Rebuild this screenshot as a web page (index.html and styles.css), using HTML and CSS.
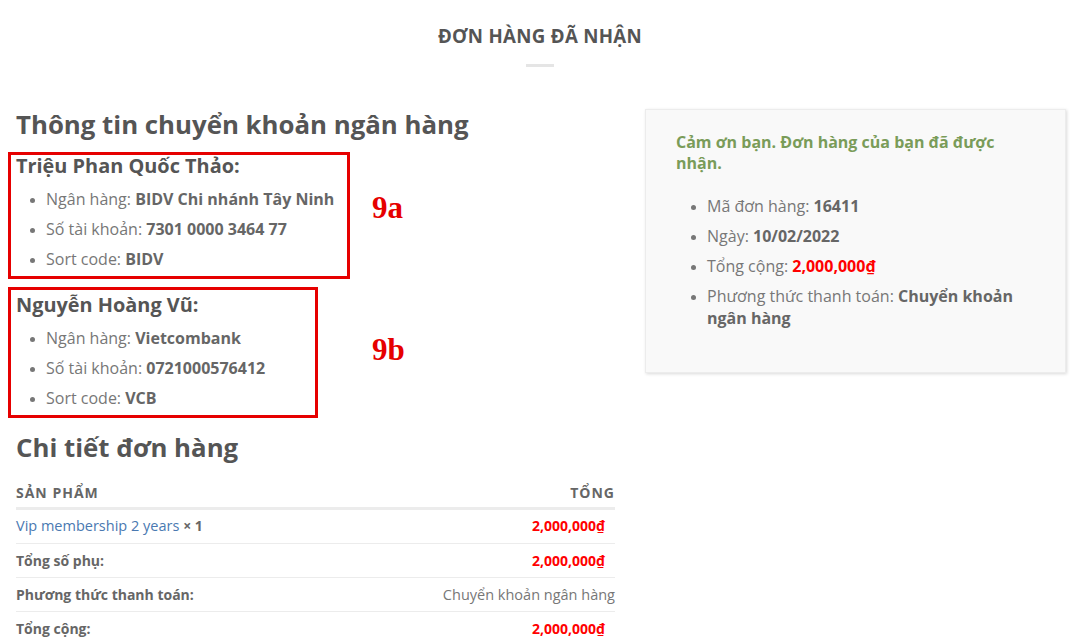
FILE: index.html
```html
<!DOCTYPE html>
<html lang="vi">
<head>
<meta charset="utf-8">
<title>Đơn hàng đã nhận</title>
<link rel="stylesheet" href="styles.css">
</head>
<body>
<div class="page">
  <header class="page-title">
    <h1>ĐƠN HÀNG ĐÃ NHẬN</h1>
    <div class="divider"></div>
  </header>
  <div class="content">
    <div class="main-col">
      <h2 class="section-title">Thông tin chuyển khoản ngân hàng</h2>
      <h3 class="account-name">Triệu Phan Quốc Thảo:</h3>
      <ul class="details">
        <li>Ngân hàng: <strong>BIDV Chi nhánh Tây Ninh</strong></li>
        <li>Số tài khoản: <strong>7301 0000 3464 77</strong></li>
        <li>Sort code: <strong>BIDV</strong></li>
      </ul>
      <h3 class="account-name">Nguyễn Hoàng Vũ:</h3>
      <ul class="details">
        <li>Ngân hàng: <strong>Vietcombank</strong></li>
        <li>Số tài khoản: <strong>0721000576412</strong></li>
        <li>Sort code: <strong>VCB</strong></li>
      </ul>
      <h2 class="section-title">Chi tiết đơn hàng</h2>
      <table class="order-table">
        <thead>
          <tr><th class="left">Sản phẩm</th><th class="right">Tổng</th></tr>
        </thead>
        <tbody>
          <tr><td class="left"><a href="#">Vip membership 2 years</a> <strong>× 1</strong></td><td class="right"><span class="amount">2,000,000₫</span></td></tr>
          <tr><th class="left">Tổng số phụ:</th><td class="right"><span class="amount">2,000,000₫</span></td></tr>
          <tr><th class="left">Phương thức thanh toán:</th><td class="right">Chuyển khoản ngân hàng</td></tr>
          <tr><th class="left">Tổng cộng:</th><td class="right"><span class="amount">2,000,000₫</span></td></tr>
        </tbody>
      </table>
    </div>
    <aside class="side-col">
      <div class="thankyou-box">
        <p class="thankyou">Cảm ơn bạn. Đơn hàng của bạn đã được nhận.</p>
        <ul class="details overview">
          <li>Mã đơn hàng: <strong>16411</strong></li>
          <li>Ngày: <strong>10/02/2022</strong></li>
          <li>Tổng cộng: <strong><span class="amount">2,000,000₫</span></strong></li>
          <li>Phương thức thanh toán: <strong>Chuyển khoản ngân hàng</strong></li>
        </ul>
      </div>
    </aside>
  </div>
  <div class="mark mark-a"></div>
  <div class="mark mark-b"></div>
  <span class="mark-label label-a">9a</span>
  <span class="mark-label label-b">9b</span>
</div>
</body>
</html>
```
FILE: styles.css
```css
* { box-sizing: border-box; }
html, body { margin: 0; padding: 0; background: #fff; }
body {
  font-family: "Open Sans", "Noto Sans", sans-serif;
  color: #777;
  font-size: 16px;
}
.page {
  position: relative;
  width: 1075px;
  height: 644px;
  overflow: hidden;
}
.page-title {
  display: flex;
  flex-direction: column;
  align-items: center;
  padding: 23px 0 0 5px;
}
.page-title h1 {
  margin: 0;
  font-size: 18.7px;
  line-height: 26px;
  font-weight: 700;
  color: #555;
  letter-spacing: 0.3px;
}
.divider {
  width: 28px;
  height: 3px;
  background: #e5e5e5;
  margin-top: 15px;
}
.content {
  display: flex;
  gap: 30px;
  padding: 0 9px 0 16px;
  margin-top: 42px;
}
.main-col { width: 599px; flex: none; }
.side-col { flex: 1; }
.section-title {
  margin: 0;
  font-size: 25.8px;
  line-height: 31px;
  font-weight: 700;
  color: #555;
}
.account-name {
  margin: 14px 0 0;
  font-size: 19.9px;
  line-height: 24px;
  font-weight: 700;
  color: #555;
}
.details {
  margin: 11px 0 23px;
  padding: 0 0 0 30px;
  list-style: disc;
}
.details li {
  line-height: 21px;
  margin-bottom: 9px;
  color: #777;
}
.details li::marker { color: #777; font-size: 13px; }
.details strong { color: #666; font-weight: 700; }
.order-table {
  width: 100%;
  border-collapse: collapse;
  margin-top: 14px;
  font-size: 14.5px;
}
.order-table th, .order-table td {
  padding: 6px 0;
  line-height: 21px;
  border-bottom: 1px solid #ececec;
  vertical-align: middle;
}
.order-table thead th {
  text-transform: uppercase;
  letter-spacing: 1px;
  font-size: 14px;
  font-weight: 700;
  color: #666;
  border-bottom: 3px solid #ececec;
  padding: 5px 0 4px;
}
.order-table tbody tr:first-child td { padding-top: 5px; padding-bottom: 7px; }
.order-table tbody th { font-weight: 700; color: #666; font-size: 14px; }
.order-table tbody tr:last-child th, .order-table tbody tr:last-child td { border-bottom: none; }
.left { text-align: left; }
.right { text-align: right; }
.order-table td { color: #777; }
.order-table a { color: #4a79b1; text-decoration: none; }
.order-table td strong { color: #666; font-size: 14px; }
.amount { color: #ff0000; font-weight: 700; }
.order-table .amount { margin-right: 10px; font-size: 14px; }
.thankyou-box {
  background: #f9f9f9;
  border: 1px solid #ececec;
  box-shadow: 1px 1px 3px rgba(0,0,0,0.15);
  padding: 22px 30px 30px;
  min-height: 264px;
}
.thankyou {
  margin: 0;
  color: #7a9c59;
  font-weight: 700;
  font-size: 16px;
  line-height: 21px;
}
.overview { margin: 21px 0 0; padding-left: 31px; }
.overview li { line-height: 22px; margin-bottom: 8px; }
.mark {
  position: absolute;
  border: 3px solid #e60000;
}
.mark-a { left: 8px; top: 152px; width: 342px; height: 127px; }
.mark-b { left: 8px; top: 287px; width: 310px; height: 131px; }
.mark-label {
  position: absolute;
  font-family: "Liberation Serif", "Times New Roman", serif;
  font-weight: 700;
  font-size: 31px;
  line-height: 31px;
  color: #e60000;
}
.label-a { left: 372px; top: 192px; }
.label-b { left: 372px; top: 334px; }
```
